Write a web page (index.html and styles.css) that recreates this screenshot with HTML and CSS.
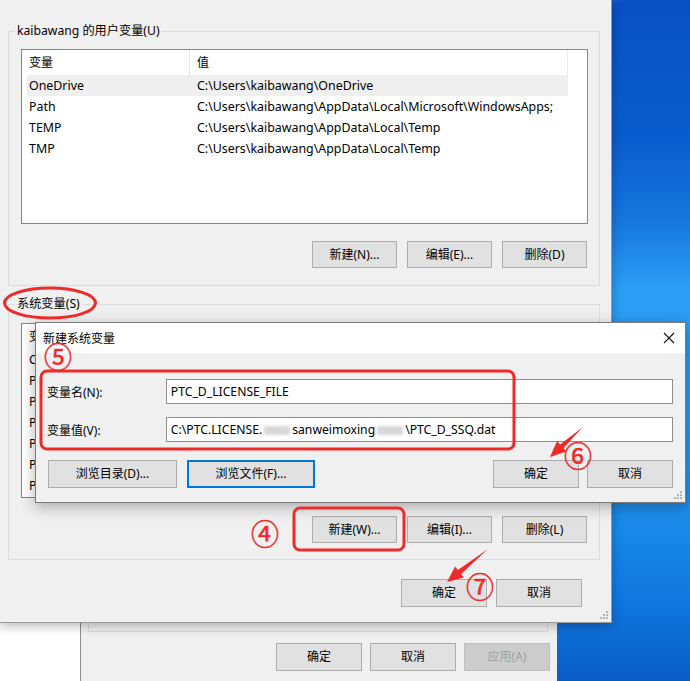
FILE: index.html
```html
<!DOCTYPE html>
<html lang="zh-CN">
<head>
<meta charset="utf-8">
<title>环境变量</title>
<link rel="stylesheet" href="styles.css">
</head>
<body>
<div class="desktop">
  <div class="white-area"></div>

  <div class="back-window">
    <div class="back-group"></div>
    <div class="btn-row back-buttons">
      <div class="btn w86">确定</div>
      <div class="btn w86">取消</div>
      <div class="btn w86 disabled">应用(A)</div>
    </div>
  </div>

  <div class="main-window">
    <div class="group user-group">
      <div class="group-label">kaibawang 的用户变量(U)</div>
      <div class="listview user-list">
        <div class="lv-header"><div class="col1">变量</div><div class="col2">值</div></div>
        <div class="lv-row hl"><div class="col1">OneDrive</div><div class="col2">C:\Users\kaibawang\OneDrive</div></div>
        <div class="lv-row"><div class="col1">Path</div><div class="col2">C:\Users\kaibawang\AppData\Local\Microsoft\WindowsApps;</div></div>
        <div class="lv-row"><div class="col1">TEMP</div><div class="col2">C:\Users\kaibawang\AppData\Local\Temp</div></div>
        <div class="lv-row"><div class="col1">TMP</div><div class="col2">C:\Users\kaibawang\AppData\Local\Temp</div></div>
      </div>
      <div class="btn-row group-buttons">
        <div class="btn">新建(N)...</div>
        <div class="btn">编辑(E)...</div>
        <div class="btn">删除(D)</div>
      </div>
    </div>

    <div class="group sys-group">
      <div class="group-label">系统变量(S)</div>
      <div class="listview sys-list">
        <div class="lv-header"><div class="col1">变量</div></div>
        <div class="lv-row"><div class="col1">C</div></div>
        <div class="lv-row"><div class="col1">P</div></div>
        <div class="lv-row"><div class="col1">P</div></div>
        <div class="lv-row"><div class="col1">P</div></div>
        <div class="lv-row"><div class="col1">P</div></div>
        <div class="lv-row"><div class="col1">P</div></div>
        <div class="lv-row"><div class="col1">P</div></div>
      </div>
      <div class="btn-row group-buttons sys-buttons">
        <div class="btn">新建(W)...</div>
        <div class="btn">编辑(I)...</div>
        <div class="btn">删除(L)</div>
      </div>
    </div>

    <div class="btn-row main-buttons">
      <div class="btn w86">确定</div>
      <div class="btn w86">取消</div>
    </div>

    <svg class="grip main-grip" width="10" height="10" viewBox="0 0 10 10"><rect x="7" y="1" width="2" height="2"/><rect x="4" y="4" width="2" height="2"/><rect x="7" y="4" width="2" height="2"/><rect x="1" y="7" width="2" height="2"/><rect x="4" y="7" width="2" height="2"/><rect x="7" y="7" width="2" height="2"/></svg>
  </div>

  <div class="dialog">
    <div class="dlg-title">
      <span>新建系统变量</span>
      <svg class="close-x" width="12" height="12" viewBox="0 0 12 12"><path d="M1 1 L11 11 M11 1 L1 11" stroke="#111" stroke-width="1.1" fill="none"/></svg>
    </div>
    <div class="dlg-body">
      <div class="form-row">
        <div class="form-label">变量名(N):</div>
        <div class="input">PTC_D_LICENSE_FILE</div>
      </div>
      <div class="form-row row2">
        <div class="form-label">变量值(V):</div>
        <div class="input">C:\PTC.LICENSE.<span class="blurred"></span>sanweimoxing<span class="blurred"></span>\PTC_D_SSQ.dat</div>
      </div>
      <div class="dlg-buttons">
        <div class="btn w129">浏览目录(D)...</div>
        <div class="btn w128 focused">浏览文件(F)...</div>
        <div class="spacer"></div>
        <div class="btn w86">确定</div>
        <div class="btn w86">取消</div>
      </div>
    </div>
    <svg class="grip dlg-grip" width="10" height="10" viewBox="0 0 10 10"><rect x="7" y="1" width="2" height="2"/><rect x="4" y="4" width="2" height="2"/><rect x="7" y="4" width="2" height="2"/><rect x="1" y="7" width="2" height="2"/><rect x="4" y="7" width="2" height="2"/><rect x="7" y="7" width="2" height="2"/></svg>
  </div>

  <svg class="marks" width="690" height="681" viewBox="0 0 690 681">
    <ellipse cx="50" cy="303" rx="45.5" ry="15" fill="none" stroke="#ee2a2a" stroke-width="3"/>
    <rect x="41" y="371" width="473" height="78" rx="6" fill="none" stroke="#ee2a2a" stroke-width="3"/>
    <rect x="294" y="508" width="110" height="42" rx="6" fill="none" stroke="#ee2a2a" stroke-width="3"/>
    <polygon points="583,427 563.5,448 566.5,451.4 550,457 557.1,441 560.1,444.4" fill="#ee2a2a"/>
    <polygon points="488,549 461.1,574 463.9,577.5 447,582 455.1,566.5 457.9,570.1" fill="#ee2a2a"/>
  </svg>
  <span class="num n5">⑤</span>
  <span class="num n4">④</span>
  <span class="num n6">⑥</span>
  <span class="num n7">⑦</span>
</div>
</body>
</html>
```
FILE: styles.css
```css
* { box-sizing: border-box; }
html, body { margin: 0; padding: 0; }
body {
  font-family: "Noto Sans", "Noto Sans CJK SC", sans-serif;
  font-size: 12px;
  color: #000;
}
.desktop {
  position: relative;
  width: 690px;
  height: 681px;
  overflow: hidden;
  background:
    linear-gradient(160deg, rgba(255,255,255,0) 0px, rgba(255,255,255,0) 175px, rgba(160,210,255,0.35) 190px, rgba(255,255,255,0) 215px),
    linear-gradient(to bottom, #0850c2 0px, #0a5dce 140px, #1676dd 220px, #2c9ef5 290px, #2897f0 460px, #1686e8 540px, #0f74dc 610px, #0a5cc7 681px);
}
.white-area {
  position: absolute;
  left: 0;
  top: 590px;
  width: 80px;
  height: 91px;
  background: #fff;
}

/* back window */
.back-window {
  position: absolute;
  left: 80px;
  top: 560px;
  width: 477px;
  height: 130px;
  background: #f0f0f0;
  border-left: 1px solid #8e8e8e;
}
.back-group {
  margin: 0 9px 0 7px;
  height: 72px;
  border: 1px solid #d9d9d9;
  border-top: none;
}
.back-buttons {
  margin-top: 11px;
  padding-right: 7px;
  gap: 8px;
}

/* main window */
.main-window {
  position: absolute;
  left: 0;
  top: 0;
  width: 612px;
  height: 623px;
  background: #f0f0f0;
  border-right: 1px solid #9a9a9a;
  border-bottom: 1px solid #9a9a9a;
  padding-top: 31px;
  box-shadow: 0 3px 10px rgba(0,0,0,0.28);
}
.group {
  margin-left: 8px;
  width: 592px;
  border: 1px solid #dcdcdc;
}
.user-group { height: 255px; }
.sys-group { height: 256px; margin-top: 18px; }
.group-label {
  display: table;
  margin: -9px 0 0 6px;
  padding: 0 2px;
  line-height: 16px;
  background: #f0f0f0;
  font-size: 12.2px;
}
.listview {
  margin-left: 12px;
  width: 567px;
  height: 175px;
  border: 1px solid #828790;
  background: #fff;
  overflow: hidden;
  font-size: 12.4px;
}
.user-list { margin-top: 10px; }
.sys-list { margin-top: 11px; }
.lv-header, .lv-row {
  display: flex;
  margin-left: 5px;
  width: 541px;
  white-space: nowrap;
}
.lv-header { height: 25px; line-height: 25px; border-right: 1px solid #ececec; }
.lv-header .col1, .lv-header .col2 { font-size: 12px; }
.lv-row { height: 21px; line-height: 21px; }
.lv-row.hl { background: #efefef; }
.col1 { width: 163px; padding-left: 2px; overflow: hidden; }
.col2 { flex: 1; padding-left: 7px; overflow: hidden; }
.lv-header .col1 { border-right: 1px solid #e5e5e5; }

.btn-row { display: flex; justify-content: flex-end; }
.group-buttons { margin-top: 17px; padding-right: 12px; gap: 10px; }
.sys-buttons { margin-top: 18px; }
.main-buttons { margin-top: 19px; padding-right: 29px; gap: 9px; }
.btn {
  width: 85px;
  height: 27px;
  line-height: 25px;
  text-align: center;
  background: #e1e1e1;
  border: 1px solid #adadad;
  white-space: nowrap;
}
.btn.w86 { width: 86px; height: 28px; line-height: 26px; }
.btn.w129 { width: 129px; height: 28px; line-height: 26px; }
.btn.w128 { width: 128px; height: 28px; line-height: 26px; }
.btn.focused { border: 2px solid #0078d7; line-height: 24px; }
.btn.disabled { background: #cccccc; border-color: #bfbfbf; color: #a0a0a0; }

.grip { position: absolute; fill: #b4b4b4; }
.main-grip { right: 2px; bottom: 2px; }
.dlg-grip { right: 2px; bottom: 2px; }

/* dialog */
.dialog {
  position: absolute;
  left: 35px;
  top: 322px;
  width: 651px;
  height: 181px;
  background: #f0f0f0;
  border: 1px solid #7a7a7a;
  box-shadow: 0 4px 14px rgba(0,0,0,0.3);
}
.dlg-title {
  height: 30px;
  background: #fff;
  display: flex;
  align-items: center;
  justify-content: space-between;
  padding: 0 10px 0 7px;
  font-size: 12px;
}
.close-x { display: block; }
.dlg-body { padding: 26px 12px 0 11px; }
.form-row { display: flex; align-items: center; }
.row2 { margin-top: 13px; }
.form-label { width: 119px; }
.input {
  width: 508px;
  height: 25px;
  line-height: 23px;
  border: 1px solid #8e8e8e;
  background: #fff;
  padding-left: 4px;
  white-space: nowrap;
  font-size: 12.2px;
}
.blurred {
  display: inline-block;
  width: 26px;
  height: 9px;
  margin: 0 2px;
  vertical-align: middle;
  background: #d8d8d8;
  filter: blur(1.5px);
}
.dlg-buttons {
  display: flex;
  margin-top: 18px;
  margin-left: 1px;
  gap: 10px;
}
.dlg-buttons .spacer { flex: 1; }
.dlg-buttons .w86 + .w86 { margin-left: -2px; }

/* annotations */
.marks { position: absolute; left: 0; top: 0; }
.num {
  position: absolute;
  font-family: "Noto Sans CJK SC", sans-serif;
  font-size: 28px;
  line-height: 24px;
  color: #ee2a2a;
  -webkit-text-stroke: 0.5px #ee2a2a;
}
.n5 { left: 44px; top: 344px; }
.n4 { left: 251px; top: 521px; }
.n6 { left: 564px; top: 443px; }
.n7 { left: 466px; top: 574px; }
```
